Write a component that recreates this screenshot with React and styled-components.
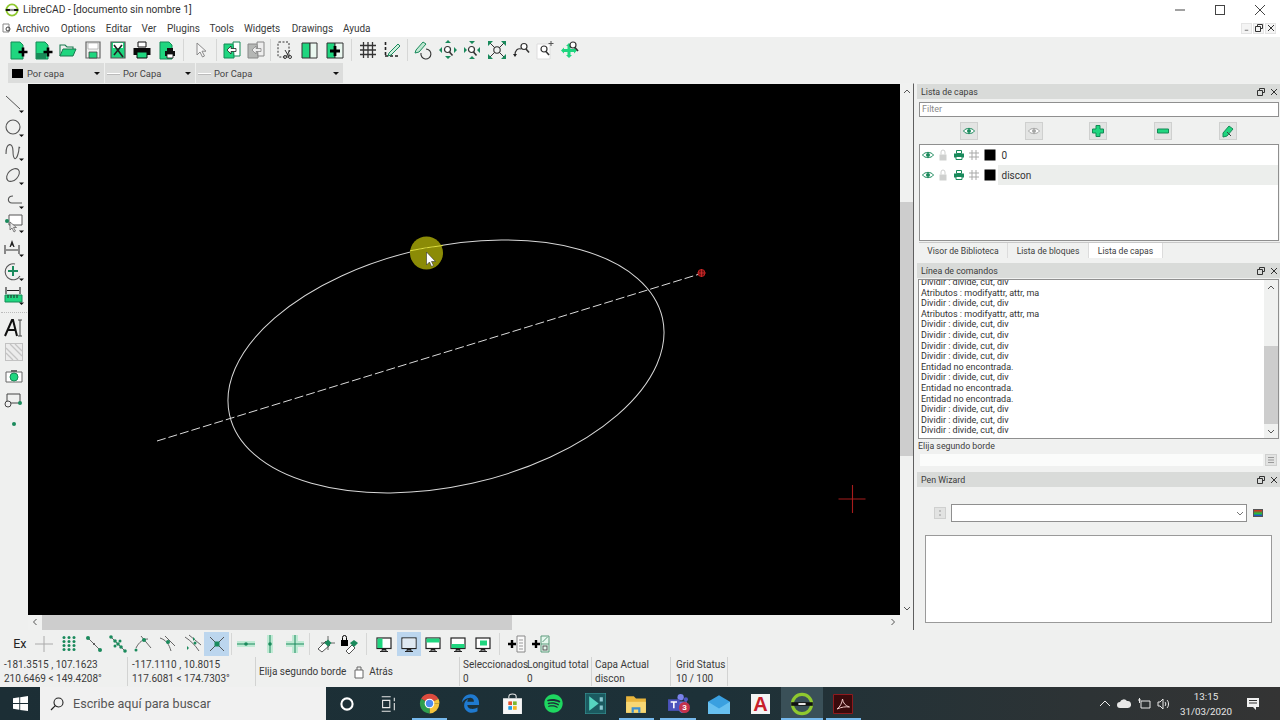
import React from 'react'
import styled, { createGlobalStyle } from 'styled-components'
import { FaSpotify, FaEdgeLegacy } from 'react-icons/fa'

const GREEN = '#1fd67f'
const TEAL = '#1a8a5c'

const GlobalStyle = createGlobalStyle`
	html, body { margin: 0; padding: 0; background: #f0f1f0; }
	body { font-family: Roboto, "Open Sans", sans-serif; color: #2b2b2b; }
	* { box-sizing: border-box; }
`

const Page = styled.div`
	width: 1280px;
	height: 720px;
	display: flex;
	flex-direction: column;
	overflow: hidden;
	background: #f0f1f0;
`

const TitleBar = styled.div`
	height: 19px;
	flex: none;
	display: flex;
	align-items: center;
	padding-left: 5px;
	background: #fff;
	font-size: 10.2px;
`

const TitleText = styled.span`
	margin-left: 4px;
	color: #333;
`

const WindowButtons = styled.div`
	margin-left: auto;
	display: flex;
`

const WindowButton = styled.div`
	width: 40px;
	height: 19px;
	display: flex;
	align-items: center;
	justify-content: center;
`

const MenuBar = styled.div`
	height: 18px;
	flex: none;
	display: flex;
	align-items: center;
	padding-left: 2px;
	background: #fff;
	font-size: 10px;
	color: #3a3a3a;
`

const MenuItem = styled.span`
	margin-left: ${({ $gap }) => $gap}px;
`

const MdiButtons = styled.div`
	margin-left: auto;
	margin-right: 4px;
	display: flex;
	gap: 1px;
`

const MdiButton = styled.div`
	width: 11px;
	height: 11px;
	display: flex;
	align-items: center;
	justify-content: center;
	background: #f4f4f4;
	border: 1px solid #e4e4e4;
`

const ToolRow = styled.div`
	height: ${({ $h }) => $h}px;
	flex: none;
	display: flex;
	align-items: center;
	padding-left: ${({ $left }) => $left}px;
	background: #eff0ef;
`

const ToolButton = styled.div`
	width: 24.6px;
	height: 24px;
	flex: none;
	display: flex;
	align-items: center;
	justify-content: center;
	background: ${({ $active }) => ($active ? '#bcd6ee' : 'transparent')};
`

const ToolSep = styled.div`
	width: ${({ $w }) => $w}px;
	height: 22px;
	flex: none;
	display: flex;
	justify-content: center;
	&::after {
		content: '';
		width: 1px;
		background: #d6d7d6;
	}
`

const ExLabel = styled.div`
	width: 24.6px;
	flex: none;
	text-align: center;
	font-size: 12.5px;
	color: #222;
`

const PenRow = styled.div`
	height: 21px;
	flex: none;
	display: flex;
	align-items: flex-end;
	gap: 1px;
	padding: 0 0 0 8px;
	background: #eff0ef;
`

const PenCombo = styled.div`
	width: ${({ $w }) => $w}px;
	height: 20px;
	display: flex;
	align-items: center;
	padding: 0 4px;
	background: #dcdddc;
	font-size: 9.4px;
	color: #444;
`

const PenSwatch = styled.span`
	width: 11px;
	height: 9px;
	margin-right: 4px;
	background: #000;
`

const PenLine = styled.span`
	width: 13px;
	height: 1px;
	margin: 0 3px 0 -2px;
	background: #fff;
	box-shadow: 0 1px 0 #bbb;
`

const ComboArrow = styled.span`
	margin-left: auto;
	width: 0;
	height: 0;
	border-left: 3px solid transparent;
	border-right: 3px solid transparent;
	border-top: 3px solid #111;
`

const Main = styled.div`
	height: 547px;
	flex: none;
	display: flex;
`

const SideBar = styled.div`
	width: 28px;
	flex: none;
	display: flex;
	flex-direction: column;
	align-items: center;
	padding-top: 9px;
	background: #eff0ef;
`

const SideButton = styled.div`
	width: 24px;
	height: 24px;
	flex: none;
	display: flex;
	align-items: center;
	justify-content: center;
`

const SideSep = styled.div`
	width: 26px;
	height: 8px;
	flex: none;
	display: flex;
	align-items: center;
	&::after {
		content: '';
		width: 100%;
		border-top: 1px dotted #bbb;
	}
`

const CanvasArea = styled.div`
	width: 886px;
	flex: none;
	display: grid;
	grid-template-columns: 872px 13px;
	grid-template-rows: 531px 15px;
	border-right: 1px solid #5f5f5f;
	border-top: 1px solid #f0f1f0;
`

const Canvas = styled.svg`
	display: block;
	width: 872px;
	height: 531px;
	background: #000;
`

const VScroll = styled.div`
	display: flex;
	flex-direction: column;
	grid-column: 2;
	grid-row: 1;
	background: #f0f1f0;
`

const ScrollArrow = styled.div`
	height: 14px;
	width: 14px;
	flex: none;
	display: flex;
	align-items: center;
	justify-content: center;
`

const ScrollGap = styled.div`
	flex: ${({ $grow }) => $grow} 0 0;
	background: ${({ $thumb }) => ($thumb ? '#cdcdcd' : 'transparent')};
`

const HScroll = styled.div`
	display: flex;
	align-items: stretch;
	grid-column: 1;
	grid-row: 2;
	background: #f0f1f0;
`

const RightPanel = styled.div`
	width: 363px;
	margin-left: 3px;
	flex: none;
	display: flex;
	flex-direction: column;
	padding-top: 1px;
`

const DockTitle = styled.div`
	height: 15px;
	flex: none;
	display: flex;
	align-items: center;
	gap: 5px;
	padding: 0 2px 0 4px;
	background: #d9dbd9;
	font-size: 8.8px;
	color: #3c3c3c;
	span { margin-right: auto; }
`

const FilterInput = styled.div`
	height: 15px;
	margin: 3px 1px 0 2px;
	flex: none;
	padding-left: 2px;
	border: 1px solid #8f8f8f;
	background: #fff;
	font-size: 9px;
	line-height: 13px;
	color: #8a8a8a;
`

const LayerTools = styled.div`
	height: 18px;
	margin: 5px 0 0 43px;
	flex: none;
	display: flex;
	gap: 46.7px;
`

const LayerTool = styled.div`
	width: 18px;
	height: 18px;
	display: flex;
	align-items: center;
	justify-content: center;
	background: #e3e4e3;
	border: 1px solid #cfd0cf;
`

const LayerList = styled.div`
	height: 97px;
	margin: 4px 1px 1px 2px;
	flex: none;
	border: 1px solid #8f8f8f;
	background: #fff;
`

const LayerRow = styled.div`
	height: 20px;
	display: flex;
	align-items: center;
	background: ${({ $selected }) => ($selected ? '#eceeec' : '#fff')};
	font-size: 10px;
	color: #333;
`

const LayerCell = styled.div`
	width: 15.5px;
	height: 100%;
	flex: none;
	display: flex;
	align-items: center;
	justify-content: center;
	background: #fff;
`

const LayerName = styled.span`
	margin-left: 4px;
`

const Tabs = styled.div`
	height: 16px;
	margin-left: 2px;
	flex: none;
	display: flex;
	border-top: 1px solid #c8c8c8;
`

const Tab = styled.div`
	width: ${({ $w }) => $w}px;
	display: flex;
	align-items: center;
	justify-content: center;
	font-size: 8.6px;
	color: #3c3c3c;
	background: ${({ $active }) => ($active ? '#fff' : 'transparent')};
	border-right: 1px solid #dcdcdc;
`

const Spaced = styled.div`
	margin-top: ${({ $top }) => $top}px;
	flex: none;
`

const CommandBox = styled.div`
	height: 160px;
	margin: 1px 1px 0 1px;
	flex: none;
	display: flex;
	border: 1px solid #8f8f8f;
	background: #fff;
`

const CommandLines = styled.div`
	flex: 1;
	overflow: hidden;
	display: flex;
	flex-direction: column;
	justify-content: flex-end;
	padding: 0 0 2px 2px;
	font-size: 9px;
	line-height: 10.6px;
	color: #333;
	white-space: nowrap;
`

const CommandScroll = styled.div`
	width: 14px;
	flex: none;
	display: flex;
	flex-direction: column;
	background: #f0f1f0;
`

const Prompt = styled.div`
	height: 14px;
	flex: none;
	padding-left: 1px;
	font-size: 8.8px;
	line-height: 14px;
	color: #3c3c3c;
`

const PromptRow = styled.div`
	height: 12px;
	margin: 1px 3px 0 3px;
	flex: none;
	display: flex;
	gap: 2px;
`

const PromptInput = styled.div`
	flex: 1;
	background: #fbfcfb;
`

const MiniButton = styled.div`
	width: 12px;
	height: 12px;
	flex: none;
	display: flex;
	align-items: center;
	justify-content: center;
	background: #e2e3e2;
	border: 1px solid #cfd0cf;
`

const WizardRow = styled.div`
	height: 18px;
	margin: 17px 0 0 17px;
	flex: none;
	display: flex;
	align-items: center;
`

const WizardSelect = styled.div`
	width: 296px;
	height: 18px;
	margin: 0 6px 0 5px;
	padding-right: 2px;
	display: flex;
	align-items: center;
	justify-content: flex-end;
	background: #fff;
	border: 1px solid #8f8f8f;
`

const Palette = styled.div`
	width: 10px;
	height: 8px;
	flex: none;
	background: linear-gradient(180deg, #e02020, #20c040 60%, #2040e0);
	border: 1px solid #555;
`

const WizardBox = styled.div`
	width: 347px;
	height: 88px;
	margin: 13px 0 0 8px;
	flex: none;
	background: #fff;
	border: 1px solid #9a9a9a;
`

const StatusBar = styled.div`
	height: 30px;
	flex: none;
	display: flex;
	background: #eff0ef;
	font-size: 10px;
	line-height: 13.4px;
	color: #3a3a3a;
`

const StatusCell = styled.div`
	width: ${({ $w }) => $w}px;
	height: 29px;
	flex: none;
	padding-left: ${({ $pad }) => $pad}px;
	display: flex;
	flex-direction: ${({ $row }) => ($row ? 'row' : 'column')};
	align-items: ${({ $row }) => ($row ? 'center' : 'stretch')};
	justify-content: ${({ $row }) => ($row ? 'flex-start' : 'center')};
	white-space: nowrap;
	border-right: ${({ $plain }) => ($plain ? 'none' : '1px solid #d2d3d2')};
`

const BackIcon = styled.span`
	display: flex;
	margin-left: 6px;
`

const BackLabel = styled.span`
	margin-left: 3px;
`

const TaskBar = styled.div`
	height: 33px;
	flex: none;
	display: flex;
	align-items: stretch;
	background: linear-gradient(90deg, #1c2e35 0%, #1d3138 55%, #2d3335 85%, #343434 100%);
`

const StartButton = styled.div`
	width: 40px;
	flex: none;
	display: flex;
	align-items: center;
	justify-content: center;
`

const SearchBox = styled.div`
	width: 286px;
	flex: none;
	display: flex;
	align-items: center;
	gap: 9px;
	padding-left: 10px;
	background: #f1f1f1;
	font-size: 12.6px;
	color: #555;
`

const TaskItem = styled.div`
	width: 41.4px;
	flex: none;
	position: relative;
	display: flex;
	align-items: center;
	justify-content: center;
	background: ${({ $current }) => ($current ? '#3a5058' : 'transparent')};
	&::after {
		content: '';
		display: ${({ $open }) => ($open ? 'block' : 'none')};
		position: absolute;
		left: ${({ $current }) => ($current ? 0 : 3)}px;
		right: ${({ $current }) => ($current ? 0 : 3)}px;
		bottom: 0;
		height: 2px;
		background: #76b9ed;
	}
`

const AcrobatTile = styled.div`
	width: 19px;
	height: 20px;
	display: flex;
	align-items: center;
	justify-content: center;
	background: #f4f4f4;
	color: #c8202a;
	font-family: "Liberation Sans", sans-serif;
	font-size: 20px;
	font-weight: 700;
	line-height: 20px;
`

const TeamsBadge = styled.span`
	position: absolute;
	left: 22px;
	top: 15px;
	width: 11px;
	height: 11px;
	border-radius: 50%;
	background: #c4314b;
	color: #fff;
	font-size: 8px;
	font-weight: 700;
	line-height: 11px;
	text-align: center;
`

const Tray = styled.div`
	margin-left: auto;
	padding-right: 11px;
	display: flex;
	align-items: center;
`

const TrayIcon = styled.div`
	width: ${({ $w }) => $w}px;
	flex: none;
	display: flex;
	justify-content: center;
`

const Clock = styled.div`
	width: 62px;
	margin-left: 2px;
	flex: none;
	text-align: center;
	font-size: 9.8px;
	line-height: 15px;
	color: #e6e6e6;
`

const Svg = ({ s = 20, v = 20, children }) => (
	<svg width={s} height={s} viewBox={`0 0 ${v} ${v}`} fill="none">
		{children}
	</svg>
)

const Plus = ({ x = 14, y = 12, r = 4.5, w = 2.6, c = '#000' }) => (
	<path d={`M${x - r} ${y}h${r * 2}M${x} ${y - r}v${r * 2}`} stroke={c} strokeWidth={w} />
)

const Monitor = ({ fill }) => (
	<Svg>
		<rect x="3" y="4" width="14" height="10.5" fill="#fff" stroke="#222" strokeWidth="1.2" />
		{fill}
		<path d="M8 15.5h4v1.5H8zM6 17.5h8" stroke="#222" strokeWidth="1" />
	</Svg>
)

const Zoom = ({ x = 10, y = 9, c = '#333' }) => (
	<>
		<circle cx={x} cy={y} r="3" stroke={c} strokeWidth="1.2" fill="#fff" />
		<path d={`M${x + 2} ${y + 2.5}l3 3.5`} stroke={c} strokeWidth="1.6" />
	</>
)

const Drop = () => <path d="M15 16.500h5l-2.500 2.500z" fill="#111" />

const icons = {
	newDoc: (
		<Svg>
			<path d="M2 2h9l3 3v14H2z" fill={GREEN} stroke="#158a56" />
			<Plus x={14} y={12} />
		</Svg>
	),
	newTpl: (
		<Svg>
			<path d="M2 2h9l3 3v14H2z" fill={GREEN} stroke="#158a56" />
			<path d="M2 13h10v6H2z" fill="#198a58" />
			<Plus x={14} y={12} />
		</Svg>
	),
	open: (
		<Svg>
			<path d="M2 16V5h5l2 2h6v2" stroke="#1a7a50" strokeWidth="1.1" />
			<path d="M2 16l3-7h13l-3 7z" fill={GREEN} stroke="#1a7a50" />
		</Svg>
	),
	save: (
		<Svg>
			<path d="M3 2h14v16H3z" fill="#eef0ee" stroke="#666" strokeWidth="1.2" />
			<path d="M5 3h10v6H5z" fill="#fff" stroke="#999" strokeWidth=".6" />
			<path d="M6 12h8v6H6z" fill={GREEN} stroke="#444" strokeWidth=".8" />
		</Svg>
	),
	saveAs: (
		<Svg>
			<path d="M3 2h14v16H3z" fill={GREEN} stroke="#555" strokeWidth="1.2" />
			<path d="M5 3h10v5H5z" fill="#fff" />
			<path d="M6 5l9 12M14 5L6 15" stroke="#222" strokeWidth="1.6" />
		</Svg>
	),
	print: (
		<Svg>
			<path d="M6 2h8v5H6z" fill="#fff" stroke="#111" />
			<path d="M1.500 8h17v7h-17z" fill="#0a0a0a" />
			<path d="M5 12h10v6H5z" fill={GREEN} stroke="#0a0a0a" />
		</Svg>
	),
	preview: (
		<Svg>
			<path d="M3 2h9l3 3v14H3z" fill={GREEN} stroke="#158a56" />
			<path d="M10 8h6v3h-6zM8 11h10v5H8z" fill="#111" />
			<path d="M10 14h6v4h-6z" fill="#fff" stroke="#111" strokeWidth=".8" />
		</Svg>
	),
	pointer: (
		<Svg>
			<path d="M6 3v12l3-3 2.500 5 2-1-2.500-4.800h4z" fill="#f6f6f6" stroke="#8a8a8a" />
		</Svg>
	),
	pageBack: (
		<Svg>
			<path d="M2 4h10v14H2z" fill={GREEN} stroke="#158a56" />
			<path d="M11 2h7v14h-6z" fill="#fff" stroke="#158a56" />
			<path d="M5 10l4-4v2.500h5v3H9V14z" fill="#fff" stroke="#222" strokeWidth=".8" />
		</Svg>
	),
	pageBackOff: (
		<Svg>
			<path d="M2 4h10v14H2z" fill="#b5b7b5" stroke="#888" />
			<path d="M11 2h7v14h-6z" fill="#eee" stroke="#888" />
			<path d="M6 10l4-4v2.500h5v3h-5V14z" fill="#eee" stroke="#888" strokeWidth=".8" />
		</Svg>
	),
	dashCut: (
		<Svg>
			<rect x="3" y="2" width="11" height="15" rx="1" stroke="#333" strokeDasharray="2 1.500" />
			<path d="M10 10l4 7M15 10l-4 7" stroke="#333" />
			<circle cx="10" cy="17" r="1.500" stroke="#333" />
			<circle cx="15" cy="17" r="1.500" stroke="#333" />
		</Svg>
	),
	book: (
		<Svg>
			<path d="M2 3h8v15H2z" fill={GREEN} stroke="#333" />
			<path d="M10 3h7v15h-7z" fill="#e9f7ef" stroke="#333" />
		</Svg>
	),
	bookAdd: (
		<Svg>
			<path d="M2 3h8v15H2z" fill={GREEN} stroke="#333" />
			<path d="M10 3h8v15h-8z" fill="#e9f7ef" stroke="#333" />
			<Plus x={10} y={11} r={5} w={2.8} />
		</Svg>
	),
	grid: (
		<Svg>
			<path d="M5.500 2v16M10 2v16M14.500 2v16M2 5.500h16M2 10h16M2 14.500h16" stroke="#333" strokeWidth="1.300" />
		</Svg>
	),
	draft: (
		<Svg>
			<path d="M3.500 2v14M3 16h15" stroke="#222" strokeWidth="1.600" strokeDasharray="3 2" />
			<path d="M7 13l9-9 2 2-9 9-3 1z" fill="#cfeedd" stroke={TEAL} />
		</Svg>
	),
	redraw: (
		<Svg>
			<path d="M3 10l7-8 3 2-7 8-4 1z" fill="#bfe8d2" stroke={TEAL} />
			<path d="M8 13a5 5 0 1 0 5-4" stroke="#333" strokeWidth="1.100" />
		</Svg>
	),
	zoomIn: (
		<Svg>
			<Zoom x={9.5} y={9.5} />
			<path d="M10 0l3 3H7zM10 19l-3-3h6zM1 10l3-3v6zM19 10l-3 3V7z" fill={TEAL} />
		</Svg>
	),
	zoomOut: (
		<Svg>
			<Zoom x={9.5} y={9.5} />
			<path d="M7 1h6l-3 3zM7 19h6l-3-3zM2 7v6l3-3zM18 7v6l-3-3z" fill={TEAL} />
		</Svg>
	),
	zoomAuto: (
		<Svg>
			<circle cx="10" cy="10" r="3.200" stroke="#333" strokeWidth="1.100" />
			<path d="M7.500 7.500L3 3M12.500 7.500L17 3M7.500 12.500L3 17M12.500 12.500L17 17" stroke="#333" />
			<path d="M1 1h5L1 6zM19 1v5l-5-5zM1 19v-5l5 5zM19 19h-5l5-5z" fill={TEAL} />
		</Svg>
	),
	zoomPrev: (
		<Svg>
			<Zoom x={12} y={6.500} />
			<path d="M3 15c0-5 3-7 6-6" stroke="#333" strokeWidth="1.100" />
			<path d="M1 14h4l-2 3z" fill="#222" />
		</Svg>
	),
	zoomWin: (
		<Svg>
			<path d="M1 4h13v15H1z" fill="#fff" stroke="#ddd" />
			<Zoom x={8} y={9} />
			<path d="M15 1v5M12.500 3.500h5" stroke="#555" />
		</Svg>
	),
	zoomPan: (
		<Svg>
			<path d="M8 3l3 3H9.500v3H13V7.500l3 3-3 3V12H9.500v3H11l-3 3-3-3h1.500v-3H3v1.500l-3-3 3-3V9h3.500V6H5z" fill={GREEN} />
			<Zoom x={12} y={5} />
		</Svg>
	),
	line: (
		<Svg>
			<path d="M2 2l14 13" stroke="#555" />
			<path d="M15 16.500h5l-2.500 2.500z" fill="#111" />
		</Svg>
	),
	circle: (
		<Svg>
			<circle cx="9" cy="9" r="7" stroke="#555" strokeWidth="1.100" />
			<Drop />
		</Svg>
	),
	spline: (
		<Svg>
			<path d="M2 12C2 0 9 0 9 9s3 10 5 3 0-8 2-6" stroke="#555" strokeWidth="1.100" />
			<Drop />
		</Svg>
	),
	ellipse: (
		<Svg>
			<ellipse cx="9" cy="9" rx="7.500" ry="5" transform="rotate(-45 9 9)" stroke="#555" strokeWidth="1.100" />
			<Drop />
		</Svg>
	),
	polyline: (
		<Svg>
			<path d="M9 6C3 6 3 13 8 13h10" stroke="#555" strokeWidth="1.100" />
			<Drop />
		</Svg>
	),
	select: (
		<Svg>
			<path d="M5 1h13v10H5z" fill="#fff" stroke="#555" />
			<circle cx="3" cy="7" r="2" fill={TEAL} />
			<path d="M6 8v8l2-2 2 4 1.500-1-2-3.500h3z" fill="#e8e8e8" stroke="#555" strokeWidth=".7" />
			<Drop />
		</Svg>
	),
	dim: (
		<Svg>
			<path d="M1 7v9M15 7v9M2 12h12" stroke="#333" strokeWidth="1.100" />
			<path d="M8 2l-2.500 7h1.300l.5-1.500h1.500l.5 1.500h1.300L8 2z" fill="#222" />
			<Drop />
		</Svg>
	),
	modify: (
		<Svg>
			<path d="M11 2a8 8 0 1 0 5 12" stroke="#555" strokeWidth="1.100" />
			<path d="M9 4v10M4 9h10" stroke={TEAL} strokeWidth="2" />
			<Drop />
		</Svg>
	),
	measure: (
		<Svg>
			<path d="M2 1v7M16 1v7M3 4.500h12" stroke="#222" strokeWidth="1.100" />
			<path d="M1 9h17v7H1z" fill={GREEN} stroke="#158a56" />
			<path d="M4 9v3M7 9v3M10 9v3M13 9v3" stroke="#222" />
			<Drop />
		</Svg>
	),
	textTool: (
		<Svg>
			<path d="M1 18L8 2h1l4 16M4 12h8" stroke="#111" strokeWidth="2" />
			<path d="M16 2v16M14 2h4M14 18h4" stroke="#444" />
		</Svg>
	),
	hatch: (
		<Svg>
			<rect x="1.500" y="1.500" width="17" height="17" fill="#ececec" stroke="#c2c2c2" />
			<path d="M2 6l12 12M2 11l7 7M6 2l12 12M11 2l7 7" stroke="#c4c4c4" strokeWidth="1.300" />
		</Svg>
	),
	camera: (
		<Svg>
			<path d="M2 6h16v10H2z" fill="#fff" stroke="#666" />
			<path d="M7 4h6v2H7z" fill="#666" />
			<circle cx="10" cy="11" r="4" fill={GREEN} stroke="#158a56" />
		</Svg>
	),
	block: (
		<Svg>
			<path d="M3 4h13v9H3z" stroke="#444" />
			<circle cx="4" cy="14" r="3" fill="#f0f0f0" stroke="#444" />
			<circle cx="16" cy="13" r="2" fill={TEAL} />
		</Svg>
	),
	dot: (
		<Svg>
			<circle cx="10" cy="10" r="2" fill={TEAL} />
		</Svg>
	),
	snapFree: (
		<Svg>
			<path d="M1 10h18M10 2v16" stroke="#aaa" />
		</Svg>
	),
	snapGrid: (
		<Svg>
			{[4, 8, 12, 16].flatMap(y => [5, 10, 15].map(x => <circle key={`${x}-${y}`} cx={x} cy={y - 0.5} r="1.500" fill={TEAL} />))}
		</Svg>
	),
	snapEnd: (
		<Svg>
			<path d="M4 4l12 12" stroke="#666" />
			<circle cx="4" cy="4" r="2" fill={TEAL} />
			<circle cx="16" cy="16" r="2" fill={TEAL} />
			<circle cx="10" cy="10" r="1" fill="#444" />
		</Svg>
	),
	snapEntity: (
		<Svg>
			<path d="M3 3l14 14" stroke="#666" />
			{[3, 7, 10, 13, 17].map(p => <circle key={p} cx={p} cy={p} r="1.800" fill={TEAL} />)}
			<circle cx="12" cy="7" r="1.500" fill={TEAL} />
			<circle cx="7" cy="12" r="1.500" fill={TEAL} />
		</Svg>
	),
	snapTan: (
		<Svg>
			<path d="M3 14C6 8 10 5 15 5M8 2l10 12" stroke="#666" />
			<circle cx="11" cy="6" r="2" fill={TEAL} />
			<circle cx="3" cy="16" r="1.500" fill={TEAL} />
		</Svg>
	),
	snapCenter: (
		<Svg>
			<path d="M3 4c6 2 9 6 11 13M8 2l10 10" stroke="#666" />
			<circle cx="11" cy="8" r="2" fill={TEAL} />
		</Svg>
	),
	snapMiddle: (
		<Svg>
			<path d="M3 3c6 4 10 8 14 14M7 1l12 10" stroke="#666" />
			<path d="M11 3l2 2-2 2zM5 12l2 2-2 2z" fill={TEAL} />
			<circle cx="13" cy="9" r="1.500" fill={TEAL} />
		</Svg>
	),
	snapX: (
		<Svg>
			<path d="M3 3l14 14M17 3L3 17" stroke="#555" />
			<rect x="7.500" y="7.500" width="5" height="5" fill={TEAL} />
		</Svg>
	),
	restrictH: (
		<Svg>
			<path d="M1 7h18v6H1z" fill="#bfead4" />
			<path d="M1 10h18" stroke={TEAL} />
			<circle cx="10" cy="10" r="1.800" fill={TEAL} />
		</Svg>
	),
	restrictV: (
		<Svg>
			<path d="M7 1h6v18H7z" fill="#bfead4" />
			<path d="M10 1v18" stroke={TEAL} />
			<circle cx="10" cy="10" r="1.800" fill={TEAL} />
		</Svg>
	),
	restrictO: (
		<Svg>
			<path d="M7 1h6v18H7zM1 7h18v6H1z" fill="#bfead4" />
			<path d="M10 1v18M1 10h18" stroke={TEAL} />
		</Svg>
	),
	relZero: (
		<Svg>
			<path d="M3 15l8-8 4 4-8 7z" fill="#fff" stroke="#555" />
			<path d="M13 2v14M6 9h14" stroke="#444" strokeWidth=".8" />
			<rect x="10.500" y="6.500" width="5" height="5" transform="rotate(45 13 9)" fill={TEAL} />
		</Svg>
	),
	relLock: (
		<Svg>
			<path d="M2 6h7v6H2z" fill="#000" />
			<path d="M3.500 6V3.500a2 2 0 0 1 4 0V6" stroke="#000" />
			<path d="M7 17l6-6 3 3-6 6z" fill="#fff" stroke="#555" />
			<path d="M11 9l4 4 4-4-4-3z" fill={TEAL} />
		</Svg>
	),
	viewLeft: <Monitor fill={<path d="M3.500 4.500h5v9.500h-5z" fill={GREEN} />} />,
	viewCenter: <Monitor fill={<path d="M3.500 4.500h13v9.500h-13z" fill="#dfe9f2" />} />,
	viewTop: <Monitor fill={<path d="M3.500 4.500h13v4h-13z" fill={GREEN} />} />,
	viewBottom: <Monitor fill={<path d="M3.500 10h13v4h-13z" fill={GREEN} />} />,
	viewFloat: <Monitor fill={<path d="M7 6.500h7v5H7z" fill={GREEN} />} />,
	addList: (
		<Svg>
			<Plus x={5} y={10} r={4} w={2.4} />
			<path d="M10 2h8v16h-8z" fill="#fafafa" stroke="#888" />
			<path d="M12 6h4M12 9h4M12 12h4M12 15h4" stroke="#999" />
		</Svg>
	),
	addTool: (
		<Svg>
			<Plus x={5} y={10} r={4} w={2.4} />
			<path d="M10 2h8v16h-8z" fill="#e6f7ee" stroke="#5a9a7a" />
			<path d="M11.500 8l5-5M10 10h8" stroke="#5a9a7a" />
			<rect x="12" y="12" width="4" height="4" stroke="#555" />
		</Svg>
	),
}

const topTools = [
	['newDoc', 'newTpl', 'open', 'save', 'saveAs', 'print', 'preview'],
	['pointer'],
	['pageBack', 'pageBackOff'],
	['dashCut', 'book', 'bookAdd'],
	['grid', 'draft'],
	['redraw', 'zoomIn', 'zoomOut', 'zoomAuto', 'zoomPrev', 'zoomWin', 'zoomPan'],
]
const topSeps = [9.4, 6.4, 4.4, 8.4, 6.4]

const sideTools = [
	['line', 'circle', 'spline', 'ellipse', 'polyline', 'select', 'dim', 'modify', 'measure'],
	['textTool', 'hatch', 'camera', 'block', 'dot'],
]

const snapTools = [
	['snapFree', 'snapGrid', 'snapEnd', 'snapEntity', 'snapTan', 'snapCenter', 'snapMiddle', 'snapX'],
	['restrictH', 'restrictV', 'restrictO'],
	['relZero', 'relLock'],
	['viewLeft', 'viewCenter', 'viewTop', 'viewBottom', 'viewFloat'],
	['addList', 'addTool'],
]
const snapSeps = [4.4, 5.4, 10.4, 9.4]

const menus = [
	['Archivo', 4], ['Options', 11.4], ['Editar', 10.4], ['Ver', 10], ['Plugins', 10.6],
	['Tools', 9.4], ['Widgets', 10], ['Drawings', 11.5], ['Ayuda', 9.8],
]

const D = 'Dividir : divide, cut, div'
const A = 'Atributos : modifyattr, attr, ma'
const E = 'Entidad no encontrada.'
const commandLines = [D, A, D, A, D, D, D, D, E, D, E, E, D, D, D]

const LibreLogo = ({ s }) => (
	<Svg s={s}>
		<circle cx="10" cy="10" r="8" stroke="#8fc92f" strokeWidth="2.600" />
		<path d="M1 10h18" stroke="#111" strokeWidth="3" />
		<path d="M7 10h6" stroke="#fff" strokeWidth="1.500" />
	</Svg>
)

const Float = () => (
	<Svg s={8} v={8}>
		<path d="M2.500 2.500V.5h5v4h-2M.5 2.500h5v5h-5z" stroke="#333" />
	</Svg>
)
const Close = () => (
	<Svg s={8} v={8}>
		<path d="M1 1l6 6M7 1L1 7" stroke="#333" />
	</Svg>
)

const Chevron = ({ up, left, right, c = '#555' }) => {
	const d = up ? 'M1 6l3-3 3 3' : left ? 'M5.500 1L2.500 4l3 3' : right ? 'M2.500 1l3 3-3 3' : 'M1 3l3 3 3-3'
	return (
		<Svg s={8} v={8}>
			<path d={d} stroke={c} />
		</Svg>
	)
}

const Dock = ({ title }) => (
	<DockTitle>
		<span>{title}</span>
		<Float />
		<Close />
	</DockTitle>
)

const eye = c => (
	<Svg s={12} v={12}>
		<path d="M.5 6C3 2.500 9 2.500 11.500 6 9 9.500 3 9.500.5 6z" fill="#fff" stroke={c} />
		<circle cx="6" cy="6" r="2" fill={c} />
	</Svg>
)
const lockIcon = (
	<Svg s={12} v={12}>
		<path d="M2.500 5.500h7v6h-7z" fill="#cfd0cf" />
		<path d="M4 5.500V3a2 2 0 0 1 4 0v2.500" stroke="#cfd0cf" />
	</Svg>
)
const printIcon = (
	<Svg s={12} v={12}>
		<path d="M3.500 1.500h5v3h-5z" fill="#fff" stroke={TEAL} />
		<path d="M1 4.500h10v4H1z" fill={TEAL} />
		<path d="M3 7.500h6v3H3z" fill="#fff" stroke={TEAL} />
	</Svg>
)
const hashIcon = (
	<Svg s={12} v={12}>
		<path d="M4 1v10M8 1v10M1 4h10M1 8h10" stroke="#a9aaa9" />
	</Svg>
)
const colorIcon = (
	<Svg s={12} v={12}>
		<rect x=".5" y=".5" width="11" height="11" fill="#000" />
	</Svg>
)

const Layer = ({ name, selected }) => (
	<LayerRow $selected={selected}>
		<LayerCell>{eye(TEAL)}</LayerCell>
		<LayerCell>{lockIcon}</LayerCell>
		<LayerCell>{printIcon}</LayerCell>
		<LayerCell>{hashIcon}</LayerCell>
		<LayerCell>{colorIcon}</LayerCell>
		<LayerName>{name}</LayerName>
	</LayerRow>
)

const Drawing = () => (
	<Canvas viewBox="28 84 872 531">
		<ellipse cx="446" cy="366.500" rx="221.800" ry="119.700" transform="rotate(-12.600 446 366.500)" stroke="#d8d8d8" strokeWidth="1" />
		<line x1="157" y1="441" x2="698" y2="274.500" stroke="#dcdcdc" strokeWidth="1" strokeDasharray="9 3" />
		<circle cx="701.500" cy="273" r="3.500" fill="#6a1010" stroke="#c02020" />
		<path d="M701.500 269v8M697.500 273h8" stroke="#e03030" strokeWidth=".7" />
		<path d="M838.500 499h27M852.500 485v28" stroke="#a81c1c" strokeWidth="1.100" />
		<circle cx="426.500" cy="253" r="16.500" fill="#8b8b06" />
		<path d="M410 250.800Q426 247.500 443 245.500" stroke="#e0e040" strokeWidth="1" />
		<path d="M426.500 252v13l3-3 2 4.500 2-1-2-4h4z" fill="#fff" stroke="#333" strokeWidth=".6" />
	</Canvas>
)

const ChromeIcon = () => (
	<Svg s={21}>
		<path d="M10 10L2 5.500A9.500 9.500 0 0 1 18.500 5.500z" fill="#dd4b3e" />
		<path d="M10 10h9.300A9.500 9.500 0 0 1 10 19.500z" fill="#f5c33b" />
		<path d="M10 10v9.500A9.500 9.500 0 0 1 2 5.500z" fill="#2f9e4f" />
		<path d="M10 10L18.500 5.500A9.500 9.500 0 0 1 19.500 10z" fill="#f5c33b" />
		<circle cx="10" cy="10" r="4.600" fill="#fff" />
		<circle cx="10" cy="10" r="3.500" fill="#4c8bf0" />
	</Svg>
)

const StoreIcon = () => (
	<Svg s={21}>
		<path d="M6.500 5V3.500a3.500 2.500 0 0 1 7 0V5" stroke="#e6e6e6" />
		<path d="M1 5h18v15H1z" fill="#f6f6f6" />
		<path d="M6 8h3.500v3.500H6z" fill="#e5532d" />
		<path d="M10.500 8H14v3.500h-3.500z" fill="#7cb82f" />
		<path d="M6 12.500h3.500V16H6z" fill="#1d9ce5" />
		<path d="M10.500 12.500H14V16h-3.500z" fill="#f5b81f" />
	</Svg>
)

const FilmoraIcon = () => (
	<Svg s={21}>
		<path d="M0 0h20v20H0z" fill="#1b5a60" stroke="#3c9a9a" />
		<path d="M4 3l9 7-9 7z" fill="#56d4c0" />
		<path d="M14 4h3v4h-3zM14 12h3v4h-3z" fill="#8ac7d0" />
	</Svg>
)

const ExplorerIcon = () => (
	<Svg s={22}>
		<path d="M1 3h7l2 2h9v13H1z" fill="#e9b53c" />
		<path d="M1 8h18v10H1z" fill="#f7d774" />
		<path d="M6 13h8v5h-2v-3H8v3H6z" fill="#3c8fd0" />
	</Svg>
)

const TeamsIcon = () => (
	<Svg s={21}>
		<circle cx="13" cy="4" r="3" fill="#7b83eb" />
		<circle cx="18" cy="6" r="2" fill="#5059c9" />
		<path d="M10 8h9v7a4 4 0 0 1-8 0z" fill="#6a71d8" />
		<path d="M1 6h11v11H1z" fill="#4b53bc" />
		<path d="M3.500 8.500h6M6.500 8.500v6" stroke="#fff" strokeWidth="1.500" />
	</Svg>
)

const MailIcon = () => (
	<Svg s={22}>
		<path d="M0 8l10-6 10 6v11H0z" fill="#3aa0e0" />
		<path d="M0 8l10 6 10-6v11H0z" fill="#67c0f0" />
	</Svg>
)

const AcrobatDark = () => (
	<Svg s={20}>
		<path d="M.5.5h19v19H.5z" fill="#3a0a0c" stroke="#8e1a1e" />
		<path d="M4 15c3-2 5-6 5.500-10 .5 4 3 7 7 8-4-.5-8 0-12.500 2z" stroke="#f0c8c8" />
	</Svg>
)

const taskApps = [
	{ key: 'cortana', node: <Svg s={16}><circle cx="10" cy="10" r="7" stroke="#fff" strokeWidth="2.600" /></Svg> },
	{ key: 'tasks', node: <Svg s={18}><path d="M3 2h10M3 18h10M4 6h8v8H4zM17 3v4M17 9v8" stroke="#e8e8e8" strokeWidth="1.200" /></Svg> },
	{ key: 'chrome', open: true, node: <ChromeIcon /> },
	{ key: 'edge', node: <FaEdgeLegacy size={19} color="#1f7ad0" /> },
	{ key: 'store', node: <StoreIcon /> },
	{ key: 'spotify', node: <FaSpotify size={19} color="#1ed760" /> },
	{ key: 'filmora', node: <FilmoraIcon /> },
	{ key: 'explorer', open: true, node: <ExplorerIcon /> },
	{ key: 'teams', open: true, node: <TeamsIcon />, badge: '3' },
	{ key: 'mail', node: <MailIcon /> },
	{ key: 'acrobat', node: <AcrobatTile>A</AcrobatTile> },
	{ key: 'librecad', open: true, current: true, node: <LibreLogo s={24} /> },
	{ key: 'reader', open: true, node: <AcrobatDark /> },
]

const App = () => (
	<Page>
		<GlobalStyle />
		<TitleBar>
			<LibreLogo s={14} />
			<TitleText>LibreCAD - [documento sin nombre 1]</TitleText>
			<WindowButtons>
				<WindowButton>
					<Svg s={10} v={10}><path d="M0 5h10" stroke="#444" /></Svg>
				</WindowButton>
				<WindowButton>
					<Svg s={10} v={10}><rect x=".5" y=".5" width="9" height="9" stroke="#444" /></Svg>
				</WindowButton>
				<WindowButton>
					<Svg s={10} v={10}><path d="M0 0l10 10M10 0L0 10" stroke="#444" /></Svg>
				</WindowButton>
			</WindowButtons>
		</TitleBar>
		<MenuBar>
			<Svg s={10} v={10}>
				<path d="M1 1h6v8H1z" fill="#fff" stroke="#888" />
				<circle cx="6" cy="6" r="2" stroke="#444" />
			</Svg>
			{menus.map(([label, gap]) => (
				<MenuItem key={label} $gap={gap}>{label}</MenuItem>
			))}
			<MdiButtons>
				<MdiButton><Svg s={7} v={8}><path d="M2 6h4" stroke="#666" /></Svg></MdiButton>
				<MdiButton><Float /></MdiButton>
				<MdiButton><Close /></MdiButton>
			</MdiButtons>
		</MenuBar>
		<ToolRow $h={25} $left={7}>
			{topTools.map((group, i) => (
				<React.Fragment key={i}>
					{group.map(name => <ToolButton key={name}>{icons[name]}</ToolButton>)}
					{topSeps[i] !== undefined && <ToolSep $w={topSeps[i]} />}
				</React.Fragment>
			))}
		</ToolRow>
		<PenRow>
			<PenCombo $w={96}><PenSwatch />Por capa<ComboArrow /></PenCombo>
			<PenCombo $w={90}><PenLine />Por Capa<ComboArrow /></PenCombo>
			<PenCombo $w={147}><PenLine />Por Capa<ComboArrow /></PenCombo>
		</PenRow>
		<Main>
			<SideBar>
				{sideTools[0].map(name => <SideButton key={name}>{icons[name]}</SideButton>)}
				<SideSep />
				{sideTools[1].map(name => <SideButton key={name}>{icons[name]}</SideButton>)}
			</SideBar>
			<CanvasArea>
				<Drawing />
				<VScroll>
					<ScrollArrow><Chevron up /></ScrollArrow>
					<ScrollGap $grow={104} />
					<ScrollGap $grow={254} $thumb />
					<ScrollGap $grow={145} />
					<ScrollArrow><Chevron /></ScrollArrow>
				</VScroll>
				<HScroll>
					<ScrollArrow><Chevron left /></ScrollArrow>
					<ScrollGap $grow={470} $thumb />
					<ScrollGap $grow={374} />
					<ScrollArrow><Chevron right /></ScrollArrow>
				</HScroll>
			</CanvasArea>
			<RightPanel>
				<Dock title="Lista de capas" />
				<FilterInput>Filter</FilterInput>
				<LayerTools>
					<LayerTool>{eye(TEAL)}</LayerTool>
					<LayerTool>{eye('#a5a6a5')}</LayerTool>
					<LayerTool>
						<Svg s={12} v={12}><path d="M4 .5h4v3.500h3.500v4H8v3.500H4V8H.5V4H4z" fill={GREEN} stroke="#158a56" /></Svg>
					</LayerTool>
					<LayerTool>
						<Svg s={12} v={12}><path d="M.5 4h11v4H.5z" fill={GREEN} stroke="#158a56" /></Svg>
					</LayerTool>
					<LayerTool>
						<Svg s={14} v={14}><path d="M2 9l6-7 4 3-6 7-4 1z" fill={GREEN} stroke="#158a56" /><path d="M6 8l4 4" stroke="#444" /></Svg>
					</LayerTool>
				</LayerTools>
				<LayerList>
					<Layer name="0" />
					<Layer name="discon" selected />
				</LayerList>
				<Tabs>
					<Tab $w={89}>Visor de Biblioteca</Tab>
					<Tab $w={81}>Lista de bloques</Tab>
					<Tab $w={74} $active>Lista de capas</Tab>
				</Tabs>
				<Spaced $top={5}>
					<Dock title="Línea de comandos" />
				</Spaced>
				<CommandBox>
					<CommandLines>
						{commandLines.map((line, i) => <div key={i}>{line}</div>)}
					</CommandLines>
					<CommandScroll>
						<ScrollArrow><Chevron up /></ScrollArrow>
						<ScrollGap $grow={52} />
						<ScrollGap $grow={79} $thumb />
						<ScrollArrow><Chevron /></ScrollArrow>
					</CommandScroll>
				</CommandBox>
				<Prompt>Elija segundo borde</Prompt>
				<PromptRow>
					<PromptInput />
					<MiniButton>
						<Svg s={8} v={8}><path d="M1 1.500h6M1 4h6M1 6.500h6" stroke="#999" /></Svg>
					</MiniButton>
				</PromptRow>
				<Spaced $top={6}>
					<Dock title="Pen Wizard" />
				</Spaced>
				<WizardRow>
					<MiniButton>
						<Svg s={8} v={8}><path d="M4 1v2M4 5v2" stroke="#999" /></Svg>
					</MiniButton>
					<WizardSelect><Chevron c="#777" /></WizardSelect>
					<Palette />
				</WizardRow>
				<WizardBox />
			</RightPanel>
		</Main>
		<ToolRow $h={27} $left={7.5}>
			<ExLabel>Ex</ExLabel>
			{snapTools.map((group, i) => (
				<React.Fragment key={i}>
					{group.map(name => (
						<ToolButton key={name} $active={name === 'snapX' || name === 'viewCenter'}>{icons[name]}</ToolButton>
					))}
					{snapSeps[i] !== undefined && <ToolSep $w={snapSeps[i]} />}
				</React.Fragment>
			))}
		</ToolRow>
		<StatusBar>
			<StatusCell $w={128} $pad={4}>
				<span>-181.3515 , 107.1623</span>
				<span>210.6469 &lt; 149.4208°</span>
			</StatusCell>
			<StatusCell $w={128} $pad={4}>
				<span>-117.1110 , 10.8015</span>
				<span>117.6081 &lt; 174.7303°</span>
			</StatusCell>
			<StatusCell $w={204} $pad={3} $row>
				<span>Elija segundo borde</span>
				<BackIcon>
					<Svg s={14} v={14}>
						<path d="M3 5h8v8H3z" fill="#fff" stroke="#666" />
						<path d="M5 5V2h4v3" stroke="#666" />
					</Svg>
				</BackIcon>
				<BackLabel>Atrás</BackLabel>
			</StatusCell>
			<StatusCell $w={67} $pad={3} $plain>
				<span>Seleccionados</span>
				<span>0</span>
			</StatusCell>
			<StatusCell $w={65} $pad={0}>
				<span>Longitud total</span>
				<span>0</span>
			</StatusCell>
			<StatusCell $w={79} $pad={3}>
				<span>Capa Actual</span>
				<span>discon</span>
			</StatusCell>
			<StatusCell $w={57} $pad={5}>
				<span>Grid Status</span>
				<span>10 / 100</span>
			</StatusCell>
		</StatusBar>
		<TaskBar>
			<StartButton>
				<Svg s={15} v={15}>
					<path d="M0 2.200l6.300-.9v5.800H0zM7.200 1.200L15 0v7.100H7.200zM0 7.900h6.300v5.800L0 12.800zM7.200 7.900H15V15l-7.800-1.100z" fill="#fff" />
				</Svg>
			</StartButton>
			<SearchBox>
				<Svg s={14} v={14}>
					<circle cx="8.500" cy="5.500" r="4.500" stroke="#222" strokeWidth="1.100" />
					<path d="M5.300 8.700L1 13" stroke="#222" strokeWidth="1.200" />
				</Svg>
				Escribe aquí para buscar
			</SearchBox>
			{taskApps.map(app => (
				<TaskItem key={app.key} $open={app.open} $current={app.current}>
					{app.node}
					{app.badge && <TeamsBadge>{app.badge}</TeamsBadge>}
				</TaskItem>
			))}
			<Tray>
				<TrayIcon $w={19}>
					<Svg s={12} v={12}><path d="M1 8l5-5 5 5" stroke="#eee" /></Svg>
				</TrayIcon>
				<TrayIcon $w={19}>
					<Svg s={14} v={14}><path d="M3 11a3 3 0 0 1 0-6 4 4 0 0 1 7-1 3.500 3.500 0 0 1 1 7z" fill="#e8e8e8" /></Svg>
				</TrayIcon>
				<TrayIcon $w={21}>
					<Svg s={14} v={14}><path d="M4 4h9v7H4zM1 3h3M2.500 1v5" stroke="#e8e8e8" /></Svg>
				</TrayIcon>
				<TrayIcon $w={19}>
					<Svg s={14} v={14}><path d="M1 5h2l3-3v10L3 9H1zM8 5c1 1 1 3 0 4M10 3c2 2 2 6 0 8" stroke="#e8e8e8" /></Svg>
				</TrayIcon>
				<Clock>
					<div>13:15</div>
					<div>31/03/2020</div>
				</Clock>
				<TrayIcon $w={32}>
					<Svg s={16} v={16}>
						<path d="M2 2h12v9h-3v3l-3-3H2z" fill="#f0f0f0" />
						<path d="M4 4.500h8M4 7h8" stroke="#333" />
					</Svg>
				</TrayIcon>
			</Tray>
		</TaskBar>
	</Page>
)

export default App
